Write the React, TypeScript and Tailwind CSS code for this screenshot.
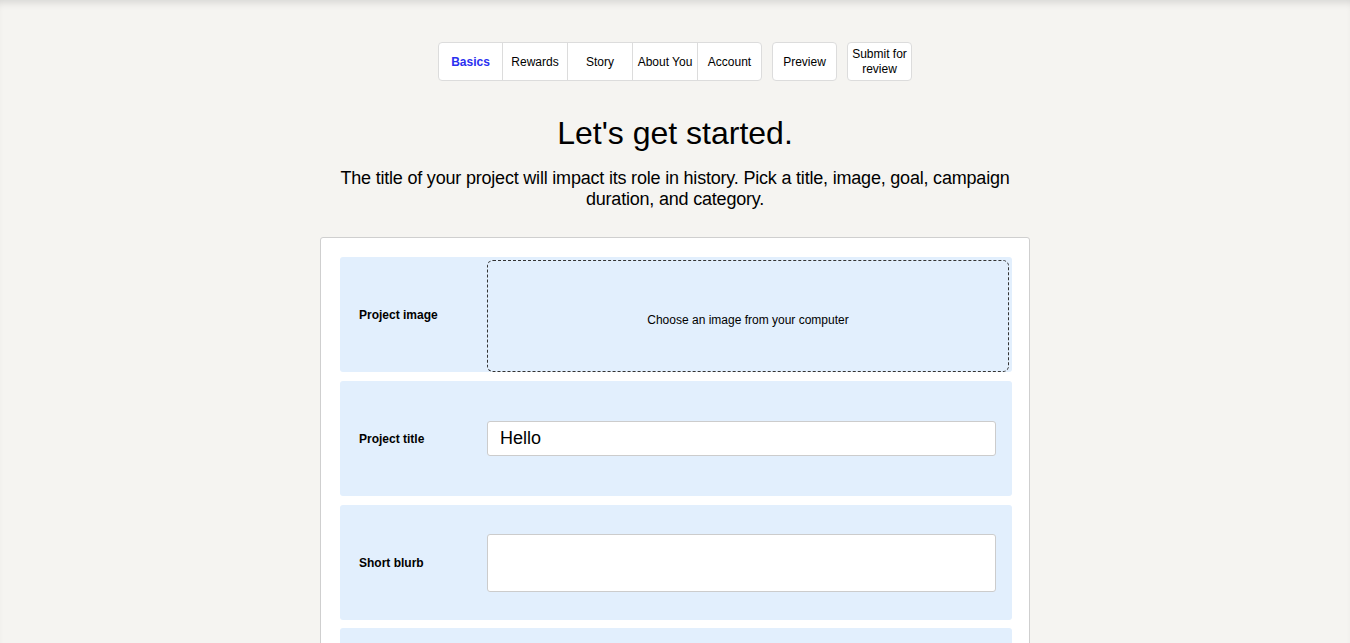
import React from "react";

const tabs = [
  { t: "Basics", w: "w-[63px]" },
  { t: "Rewards", w: "w-[65px]" },
  { t: "Story", w: "w-[65px]" },
  { t: "About You", w: "w-[65px]" },
  { t: "Account", w: "w-[64px]" },
];

export default function App() {
  return (
    <div
      className="min-h-[643px] bg-[#f5f4f1] text-black shadow-[inset_0_7px_8px_-5px_rgba(0,0,0,0.14)]"
      style={{ fontFamily: '"Liberation Sans", Arial, Helvetica, sans-serif' }}
    >
      <div className="flex justify-center pt-[42px]">
        <div className="flex h-[39px] shrink-0 rounded-[4px] border border-[#dcdcdc] bg-white overflow-hidden">
          {tabs.map(({ t, w }, i) => (
            <div
              key={t}
              className={`flex ${w} shrink-0 items-center justify-center whitespace-nowrap text-[12px] ${
                i > 0 ? "border-l border-[#dcdcdc]" : ""
              } ${i === 0 ? "font-bold text-[#2a2ff0]" : ""}`}
            >
              {t}
            </div>
          ))}
        </div>
        <div className="ml-[10px] flex h-[39px] w-[65px] shrink-0 items-center justify-center rounded-[4px] border border-[#dcdcdc] bg-white text-[12px]">
          Preview
        </div>
        <div className="ml-[10px] flex h-[39px] w-[65px] shrink-0 items-center justify-center rounded-[4px] border border-[#dcdcdc] bg-white text-center text-[12px] leading-[15px]">
          Submit for
          <br />
          review
        </div>
      </div>

      <h1 className="mt-[34px] text-center text-[32px] leading-[37px] font-normal">
        Let's get started.
      </h1>
      <p className="mx-auto mt-[16px] w-[690px] text-center text-[18px] leading-[21px] tracking-[-0.2px]">
        The title of your project will impact its role in history. Pick a title, image, goal, campaign duration, and category.
      </p>

      <div className="mx-auto mt-[27px] w-[710px] rounded-[3px] border border-[#cfcfcf] bg-white pl-[19px] pr-[17px] pt-[19px] pb-[20px]">
        <div className="flex flex-col gap-[9px]">
          <div className="flex h-[115px] rounded-[3px] bg-[#e2effd]">
            <div className="flex w-[147px] items-center pl-[19px] text-[12px] font-bold">
              Project image
            </div>
            <div className="mt-[3px] mr-[3px] flex flex-1 items-center justify-center rounded-[6px] border border-dashed border-[#333] pt-[7px] text-[12px]">
              Choose an image from your computer
            </div>
          </div>

          <div className="flex h-[115px] items-center rounded-[3px] bg-[#e2effd]">
            <div className="w-[147px] pl-[19px] text-[12px] font-bold">Project title</div>
            <div className="mr-[16px] flex h-[35px] flex-1 items-center rounded-[3px] border border-[#cccccc] bg-white pl-[12px] text-[18px]">
              Hello
            </div>
          </div>

          <div className="flex h-[115px] items-center rounded-[3px] bg-[#e2effd]">
            <div className="w-[147px] pl-[19px] text-[12px] font-bold">Short blurb</div>
            <div className="mr-[16px] h-[58px] flex-1 rounded-[3px] border border-[#cccccc] bg-white" />
          </div>

          <div className="-mt-[1px] h-[115px] rounded-[3px] bg-[#e2effd]" />
        </div>
      </div>
    </div>
  );
}
